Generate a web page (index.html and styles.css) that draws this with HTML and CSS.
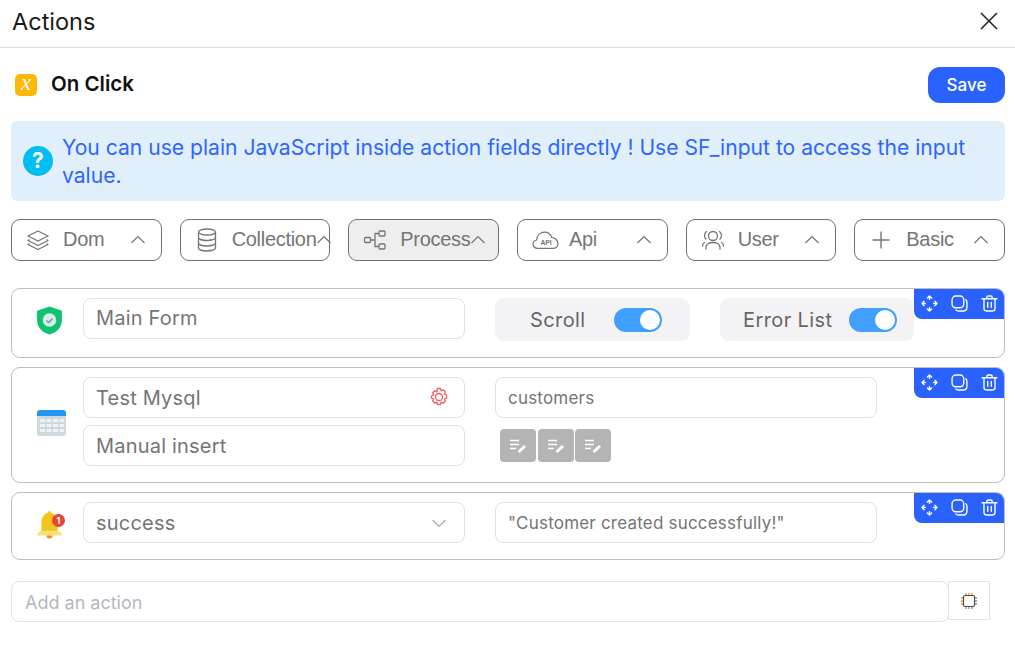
FILE: index.html
```html
<!DOCTYPE html>
<html lang="en">
<head>
<meta charset="utf-8">
<title>Actions</title>
<link rel="stylesheet" href="styles.css">
</head>
<body>
<svg class="sprites" width="0" height="0" aria-hidden="true">
  <symbol id="chev" viewBox="0 0 16 16"><path d="M1.500 11 8 4.500 14.500 11" fill="none" stroke="currentColor" stroke-width="1.200"/></symbol>
  <symbol id="move" viewBox="0 0 16 16"><path d="M8 1v3M8 12v3M1 8h3M12 8h3M6 2.800 8 1l2 1.800M6 13.200 8 15l2-1.800M2.800 6 1 8l1.800 2M13.200 6 15 8l-1.800 2" fill="none" stroke="currentColor" stroke-width="1.400" stroke-linecap="round" stroke-linejoin="round"/></symbol>
  <symbol id="copy" viewBox="0 0 16 16"><rect x="1" y="1" width="11" height="11" rx="3.500" fill="none" stroke="currentColor" stroke-width="1.300"/><path d="M14 4.500c.8.700 1 1.500 1 2.500v4.500c0 2-1.500 3.500-3.500 3.500H7c-1 0-1.800-.3-2.500-1" fill="none" stroke="currentColor" stroke-width="1.300" stroke-linecap="round"/></symbol>
  <symbol id="trash" viewBox="0 0 16 16"><path d="M1 3.500h14M5.500 3.500V2.200c0-.7.500-1.200 1.200-1.200h2.600c.7 0 1.200.5 1.200 1.200v1.300M2.800 3.500v9.300C2.800 14 3.800 15 5 15h6c1.200 0 2.200-1 2.200-2.200V3.500M6.300 7v4.500M9.700 7v4.500" fill="none" stroke="currentColor" stroke-width="1.300" stroke-linecap="round"/></symbol>
  <symbol id="note" viewBox="0 0 18 14"><path d="M1 1.500h9M1 5.500h9M1 9.500h6" fill="none" stroke="currentColor" stroke-width="1.700"/><path d="M9.500 13 16 7" fill="none" stroke="currentColor" stroke-width="3"/></symbol>
</svg>

<header class="top">
  <h1 class="title">Actions</h1>
  <svg class="close" viewBox="0 0 20 20" width="20" height="20"><path d="M2 2 18 18M18 2 2 18" stroke="#222" stroke-width="1.600" fill="none"/></svg>
</header>

<section class="trigger">
  <div class="trigger-name">
    <span class="x-badge">x</span>
    <strong>On Click</strong>
  </div>
  <button class="save">Save</button>
</section>

<section class="alert">
  <span class="help">?</span>
  <p>You can use plain JavaScript inside action fields directly ! Use SF_input to access the input value.</p>
</section>

<nav class="tools">
  <button class="tool">
    <svg class="tool-icon" viewBox="0 0 24 24"><path d="M12 3 22 8l-10 5L2 8zM3.500 11.500 2 12.500l10 5 10-5-1.500-1M3.500 15.500 2 16.500l10 5 10-5-1.500-1" fill="none" stroke="currentColor" stroke-width="1.300" stroke-linejoin="round"/></svg>
    <span class="tool-label">Dom</span>
    <svg class="chev"><use href="#chev"/></svg>
  </button>
  <button class="tool">
    <svg class="tool-icon" viewBox="0 0 24 24"><g fill="none" stroke="currentColor" stroke-width="1.300"><ellipse cx="12" cy="4" rx="8.500" ry="3"/><path d="M3.500 4v16c0 1.700 3.800 3 8.500 3s8.500-1.300 8.500-3V4M3.500 9.500c0 1.700 3.800 3 8.500 3s8.500-1.300 8.500-3M3.500 15c0 1.700 3.800 3 8.500 3s8.500-1.300 8.500-3M15 11v1M15 16.500v1M15 21.500v.5"/></g></svg>
    <span class="tool-label">Collection</span>
    <svg class="chev"><use href="#chev"/></svg>
  </button>
  <button class="tool active">
    <svg class="tool-icon" viewBox="0 0 24 24"><g fill="none" stroke="currentColor" stroke-width="1.300"><rect x="1.500" y="9.500" width="6" height="5" rx="1"/><rect x="16" y="3" width="6" height="5" rx="1"/><rect x="16" y="16" width="6" height="5" rx="1"/><path d="M7.500 12H12M16 5.500h-4v13h4"/></g></svg>
    <span class="tool-label">Process</span>
    <svg class="chev"><use href="#chev"/></svg>
  </button>
  <button class="tool">
    <svg class="tool-icon wide" viewBox="0 0 26 22"><path d="M6 19C3 19 1 17.500 1 15c0-2 1.400-3.500 3.500-4C5 6.500 8 3.500 12 3.500c3.500 0 6 2 7 5 3.500.3 6 3 6 6 0 2.500-2 4.500-5 4.500z" fill="none" stroke="currentColor" stroke-width="1.200"/><text x="13.500" y="16" class="api-text">API</text></svg>
    <span class="tool-label">Api</span>
    <svg class="chev"><use href="#chev"/></svg>
  </button>
  <button class="tool">
    <svg class="tool-icon" viewBox="0 0 24 24"><g fill="none" stroke="currentColor" stroke-width="1.300" stroke-linecap="round"><circle cx="12" cy="8" r="4.500"/><path d="M5 21v-1.500C5 16.500 8 14.500 12 14.500s7 2 7 5V21M5.500 3.500C4 4.500 3.500 6 3.500 7.500s.5 2.500 1.500 3.500M18.500 3.500c1.500 1 2 2.500 2 4s-.5 2.500-1.500 3.500M1.500 18c0-1.500.5-3 2-3.500M22.500 18c0-1.500-.5-3-2-3.500"/></g></svg>
    <span class="tool-label">User</span>
    <svg class="chev"><use href="#chev"/></svg>
  </button>
  <button class="tool">
    <svg class="tool-icon" viewBox="0 0 24 24"><path d="M12 3.500v17M3.500 12h17" fill="none" stroke="currentColor" stroke-width="1.400"/></svg>
    <span class="tool-label">Basic</span>
    <svg class="chev"><use href="#chev"/></svg>
  </button>
</nav>

<main class="actions">
  <article class="action action-one">
    <div class="action-icon">
      <svg viewBox="1 0 24 28" width="25" height="29"><path d="M13 .5 25 4.500v9C25 20.500 20 25.500 13 27.500 6 25.500 1 20.500 1 13.500v-9z" fill="#0ec26f"/><circle cx="13" cy="13.500" r="6.500" fill="#d9ecea"/><path d="M10 14l2.200 2 3.800-4" fill="none" stroke="#57a78f" stroke-width="1.300"/></svg>
    </div>
    <div class="field-col"><div class="field">Main Form</div></div>
    <div class="switches">
      <div class="switch-box"><span>Scroll</span><span class="switch"></span></div>
      <div class="switch-box"><span>Error List</span><span class="switch"></span></div>
    </div>
    <div class="row-tools">
      <svg><use href="#move"/></svg><svg><use href="#copy"/></svg><svg><use href="#trash"/></svg>
    </div>
  </article>

  <article class="action action-two">
    <div class="action-icon">
      <svg viewBox="0 0 29 26" width="29" height="26"><path d="M0 3a3 3 0 0 1 3-3h23a3 3 0 0 1 3 3v3H0z" fill="#2196f3"/><path d="M0 6h29v17a3 3 0 0 1-3 3H3a3 3 0 0 1-3-3z" fill="#cfd8dc"/><path d="M3 9h5v3H3zM9.500 9h5v3h-5zM16 9h5v3h-5zM22.500 9H27v3h-4.500zM3 14h5v3H3zM9.500 14h5v3h-5zM16 14h5v3h-5zM22.500 14H27v3h-4.500zM3 19h5v3H3zM9.500 19h5v3h-5zM16 19h5v3h-5zM22.500 19H27v3h-4.500z" fill="#eef2f4"/></svg>
    </div>
    <div class="field-col">
      <div class="field">Test Mysql
        <svg class="gear" viewBox="0 0 20 20" width="20" height="20"><g fill="none" stroke="#f25c5c" stroke-width="1.300"><circle cx="10" cy="10" r="3.500"/><path d="M8.500 1.500h3l.6 2.300 2-1 2.300 2.200-1.100 2 2.200.8v3.400l-2.200.8 1.100 2-2.300 2.200-2-1-.6 2.300h-3l-.6-2.300-2 1-2.300-2.200 1.100-2-2.200-.8V8.800l2.200-.8-1.100-2 2.300-2.200 2 1z" stroke-linejoin="round"/></g></svg>
      </div>
      <div class="field">Manual insert</div>
    </div>
    <div class="field-col narrow">
      <div class="field small">customers</div>
      <div class="edit-buttons">
        <span class="edit"><svg viewBox="0 0 18 14"><use href="#note"/></svg></span>
        <span class="edit"><svg viewBox="0 0 18 14"><use href="#note"/></svg></span>
        <span class="edit"><svg viewBox="0 0 18 14"><use href="#note"/></svg></span>
      </div>
    </div>
    <div class="row-tools">
      <svg><use href="#move"/></svg><svg><use href="#copy"/></svg><svg><use href="#trash"/></svg>
    </div>
  </article>

  <article class="action action-three">
    <div class="action-icon">
      <span class="bell">
        <svg viewBox="1 0 24 27.500" width="25" height="28"><path d="M13 0c1 0 1.500.7 1.500 1.800C19 3 21 7 21 12v8H5v-8c0-5 2-9 6.500-10.200C11.500.7 12 0 13 0z" fill="#f4c51f"/><path d="M1 23c0-1.500 2-3 4-3h16c2 0 4 1.500 4 3v1H1z" fill="#f9df74"/><path d="M10 24h6a3 3 0 0 1-6 0z" fill="#ef8f1c"/></svg>
        <span class="bell-count">1</span>
      </span>
    </div>
    <div class="field-col">
      <div class="field">success
        <svg class="select-chev" viewBox="0 0 16 16" width="16" height="16"><path d="M1.500 5 8 11.500 14.500 5" fill="none" stroke="#aaa" stroke-width="1.200"/></svg>
      </div>
    </div>
    <div class="field-col narrow"><div class="field small">"Customer created successfully!"</div></div>
    <div class="row-tools">
      <svg><use href="#move"/></svg><svg><use href="#copy"/></svg><svg><use href="#trash"/></svg>
    </div>
  </article>
</main>

<footer class="add">
  <div class="add-input">Add an action</div>
  <div class="add-side">
    <svg viewBox="0 0 18 18" width="18" height="18"><rect x="3.500" y="3.500" width="11" height="11" rx="1.500" fill="#fff" stroke="#5a4a3a" stroke-width="1.200"/><path d="M6 1v2M9 1v2M12 1v2M1 6h2M1 9h2M1 12h2" stroke="#e08a3c" stroke-width="1.300"/><path d="M6 15v2M9 15v2M12 15v2M15 6h2M15 9h2M15 12h2" stroke="#6f93b8" stroke-width="1.300"/></svg>
  </div>
</footer>
</body>
</html>
```
FILE: styles.css
```css
* { box-sizing: border-box; }
html, body { margin: 0; padding: 0; }
body {
  width: 1015px;
  height: 661px;
  overflow: hidden;
  background: #fff;
  font-family: Inter, "Liberation Sans", sans-serif;
  color: #222;
}
.sprites { position: absolute; }

.top {
  height: 48px;
  padding: 0 16px 5px 12px;
  border-bottom: 1px solid #dcdcdc;
  display: flex;
  align-items: center;
  justify-content: space-between;
}
.title { margin: 0; font-size: 23.500px; font-weight: 400; color: #1a1a1a; }

.trigger {
  height: 36px;
  margin: 19px 10px 0 15px;
  display: flex;
  align-items: center;
  justify-content: space-between;
}
.trigger-name { display: flex; align-items: center; gap: 14px; }
.trigger-name strong { font-size: 20.500px; line-height: 22px; margin-top: -2px; font-weight: 600; color: #111; }
.x-badge {
  width: 22px;
  height: 22px;
  border-radius: 5px;
  background: #ffb703;
  color: #fff;
  font: italic 23px/18px "Liberation Serif", serif;
  text-align: center;
}
.save {
  width: 77px;
  height: 36px;
  border: 0;
  border-radius: 12px;
  background: #2962ff;
  color: #fff;
  font: 500 17px Inter, sans-serif;
}

.alert {
  height: 80px;
  margin: 18px 10px 0 11px;
  padding: 11px 12px;
  background: #e1effb;
  border-radius: 6px;
  display: flex;
  align-items: center;
  gap: 9px;
}
.help {
  flex: none;
  width: 30px;
  height: 30px;
  border-radius: 50%;
  background: #00bdf2;
  color: #fff;
  font: 700 21px/30px Inter, sans-serif;
  text-align: center;
}
.alert p {
  margin: 2px 0 0;
  font-size: 21.100px;
  line-height: 28px;
  color: #2f66ff;
}

.tools {
  margin: 18px 10px 0 11px;
  display: grid;
  grid-template-columns: repeat(6, minmax(0, 1fr));
  gap: 18px;
}
.tool {
  min-width: 0;
  height: 42px;
  padding: 0 15px 2px 14px;
  background: #fff;
  border: 1px solid #707070;
  border-radius: 9px;
  color: #757575;
  display: flex;
  align-items: center;
  font: 20px "Liberation Sans", sans-serif;
  letter-spacing: -.3px;
}
.tool.active { background: #eeeeee; }
.tool-icon { flex: none; width: 24px; height: 24px; margin-top: 2px; }
.tool-icon.wide { width: 27px; margin-right: -3px; }
.api-text { font: 700 6.500px "Liberation Sans", sans-serif; fill: currentColor; text-anchor: middle; letter-spacing: 0; }
.tool-label { margin-left: 13px; white-space: nowrap; }
.tool .chev { flex: none; width: 16px; height: 16px; margin: 2px 0 0 auto; }

.actions {
  margin: 27px 10px 0 11px;
  display: flex;
  flex-direction: column;
  gap: 9px;
}
.action {
  position: relative;
  padding: 9px 0 0 0;
  border: 1px solid #bdbdbd;
  border-radius: 9px;
  display: flex;
  align-items: flex-start;
}
.action-one { height: 70px; }
.action-two { height: 116px; }
.action-three { height: 68px; }
.action-icon {
  flex: none;
  width: 71px;
  display: flex;
  padding-left: 25px;
}
.action-one .action-icon { padding-top: 8px; }
.action-two .action-icon { padding-top: 33px; }
.action-three .action-icon { padding-top: 9px; }

.field-col { flex: none; width: 382px; display: flex; flex-direction: column; gap: 7px; }
.field-col.narrow { margin-left: 30px; }
.field {
  height: 41px;
  padding: 0 12px;
  border: 1px solid #e0e0e8;
  border-radius: 8px;
  color: #757575;
  font-size: 20px;
  line-height: 39px;
  letter-spacing: .2px;
  display: flex;
  align-items: center;
  justify-content: space-between;
}
.action-two .field, .action-three .field { padding-top: 2px; }
.field.small { font-size: 17px; }
.gear { margin: -4px 3px 0 0; }
.select-chev { margin: -2px 5px 0 0; }

.switches { margin-left: 30px; display: flex; gap: 30px; }
.switch-box {
  width: 195px;
  height: 43px;
  padding: 0 28px 0 35px;
  background: #f3f3f6;
  border-radius: 9px;
  display: flex;
  align-items: center;
  justify-content: space-between;
  font-size: 20px;
  color: #666;
  letter-spacing: .4px;
}
.switch-box + .switch-box { width: 194px; padding: 0 17px 0 23px; }
.switch {
  position: relative;
  width: 48px;
  height: 24px;
  border-radius: 12px;
  background: #41a0ff;
}
.switch::after {
  content: "";
  position: absolute;
  right: 2px;
  top: 2px;
  width: 20px;
  height: 20px;
  border-radius: 50%;
  background: #fff;
}

.row-tools {
  position: absolute;
  top: 0;
  right: 0;
  width: 90px;
  height: 30px;
  padding: 6px 6px 0 6px;
  background: #2962ff;
  color: #fff;
  border-radius: 0 8px 0 8px;
  display: flex;
  justify-content: space-between;
}
.row-tools svg { width: 17px; height: 17px; margin: 0 .5px; }

.edit-buttons { margin-left: 5px; margin-top: 4px; display: flex; gap: 1.500px; }
.edit {
  width: 36px;
  height: 33px;
  border-radius: 4px;
  background: #b4b4b4;
  color: #fff;
  display: flex;
  align-items: center;
  justify-content: center;
}
.edit svg { width: 18px; height: 14px; }

.bell { position: relative; display: block; width: 25px; height: 28px; }
.bell-count {
  position: absolute;
  right: -3px;
  top: 3px;
  width: 13px;
  height: 13px;
  border-radius: 50%;
  background: #ea4335;
  color: #fff;
  font: 700 9px/13px Inter, sans-serif;
  text-align: center;
}

.add { margin: 21px 0 0 11px; display: flex; align-items: flex-start; }
.add-input {
  width: 938px;
  height: 41px;
  padding: 1px 13px 0;
  border: 1px solid #e0e0e8;
  border-radius: 8px;
  color: #b3b8c0;
  font-size: 18px;
  line-height: 39px;
}
.add-side {
  width: 42px;
  height: 39px;
  margin-left: -1px;
  border: 1px solid #e2e2e2;
  display: flex;
  align-items: center;
  justify-content: center;
}
```
